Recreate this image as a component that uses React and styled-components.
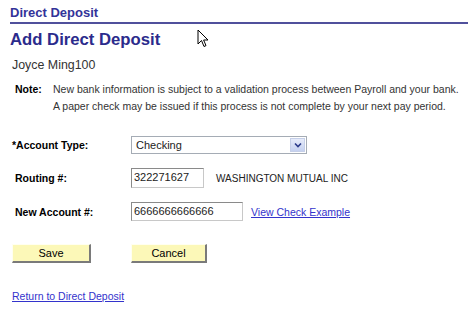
import React from "react";
import styled, { createGlobalStyle } from "styled-components";

const Global = createGlobalStyle`
  html, body { margin: 0; padding: 0; background: #fff; }
  body { font-family: "Liberation Sans", Arial, sans-serif; color: #333; }
`;

const Page = styled.div`
  position: relative;
  width: 474px;
  height: 311px;
  padding: 5px 6px 0 10px;
  box-sizing: border-box;
  overflow: hidden;
`;

const PageTitle = styled.div`
  font-size: 13px;
  font-weight: bold;
  color: #333399;
  line-height: 15px;
  padding-bottom: 2px;
  border-bottom: 2px solid #50509c;
`;

const Heading = styled.h1`
  margin: 5px 0 0 0;
  font-size: 16.7px;
  font-weight: bold;
  color: #2b2b8c;
  line-height: 22px;
`;

const Name = styled.div`
  margin: 7px 0 0 2px;
  font-size: 12.4px;
  color: #333;
  line-height: 14px;
`;

const NoteRow = styled.div`
  display: flex;
  margin: 9px 0 0 5px;
  font-size: 10.5px;
  line-height: 17px;
  white-space: nowrap;
`;

const NoteLabel = styled.span`
  font-weight: bold;
  color: #000;
  width: 38px;
  flex: none;
`;

const NoteText = styled.div`
  color: #333;
`;

const Form = styled.div`
  display: grid;
  grid-template-columns: 116px auto;
  row-gap: 14px;
  align-items: center;
  margin: 21px 0 0 5px;
`;

const Label = styled.div`
  font-size: 10.5px;
  font-weight: bold;
  color: #000;
  margin-left: ${(p) => (p.$required ? "-3px" : "0")};
`;

const Field = styled.div`
  display: flex;
  align-items: center;
  gap: ${(p) => p.$gap || 12}px;
`;

const Select = styled.div`
  width: 176px;
  height: 18px;
  box-sizing: border-box;
  border: 1px solid #a5acb5;
  display: flex;
  align-items: center;
  justify-content: space-between;
  font-size: 11px;
  color: #222;
  padding-left: 4px;
  background: #fff;
`;

const Arrow = styled.div`
  width: 15px;
  height: 14px;
  margin-right: 1px;
  background: linear-gradient(#e6ebfa, #c5d1f0);
  border: 1px solid #c5cfe8;
  box-sizing: border-box;
  display: flex;
  align-items: center;
  justify-content: center;
`;

const Input = styled.div`
  width: ${(p) => p.$w}px;
  height: ${(p) => p.$h}px;
  box-sizing: border-box;
  border: 1px solid #8a8a8a;
  border-right-color: #c8c8c8;
  border-bottom-color: #c8c8c8;
  font-size: 11px;
  color: #222;
  padding: 1px 0 0 2px;
  line-height: 14px;
`;

const Plain = styled.span`
  font-size: 10px;
  color: #222;
`;

const Link = styled.a`
  font-size: 10.5px;
  color: #3333cc;
  text-decoration: underline;
`;

const Buttons = styled.div`
  display: grid;
  grid-template-columns: 119px auto;
  margin: 23px 0 0 2px;
`;

const Button = styled.div`
  width: ${(p) => p.$w}px;
  height: 19px;
  box-sizing: border-box;
  background: #fcf8b8;
  border-right: 2px solid #7a7a7a;
  border-bottom: 2px solid #7a7a7a;
  border-top: 1px solid #fffff0;
  border-left: 1px solid #fffff0;
  font-size: 11px;
  color: #000;
  display: flex;
  align-items: center;
  justify-content: center;
`;

const Footer = styled.div`
  margin: 23px 0 0 2px;
`;

const Cursor = styled.svg`
  position: absolute;
  left: 197px;
  top: 29px;
`;

export default function App() {
  return (
    <>
      <Global />
      <Page>
        <PageTitle>Direct Deposit</PageTitle>
        <Heading>Add Direct Deposit</Heading>
        <Name>Joyce Ming100</Name>
        <NoteRow>
          <NoteLabel>Note:</NoteLabel>
          <NoteText>
            New bank information is subject to a validation process between Payroll and your bank.
            <br />
            A paper check may be issued if this process is not complete by your next pay period.
          </NoteText>
        </NoteRow>
        <Form>
          <Label $required>*Account Type:</Label>
          <Field>
            <Select>
              Checking
              <Arrow>
                <svg width="8" height="6" viewBox="0 0 8 6">
                  <path d="M1 1.5 L4 4.5 L7 1.5" fill="none" stroke="#2a3a8a" strokeWidth="1.6" />
                </svg>
              </Arrow>
            </Select>
          </Field>
          <Label>Routing #:</Label>
          <Field>
            <Input $w={73} $h={20}>322271627</Input>
            <Plain>WASHINGTON MUTUAL INC</Plain>
          </Field>
          <Label>New Account #:</Label>
          <Field $gap={8}>
            <Input $w={112} $h={19}>6666666666666</Input>
            <Link href="#">View Check Example</Link>
          </Field>
        </Form>
        <Buttons>
          <Button $w={79}>Save</Button>
          <Button $w={76}>Cancel</Button>
        </Buttons>
        <Footer>
          <Link href="#">Return to Direct Deposit</Link>
        </Footer>
        <Cursor width="14" height="20" viewBox="0 0 14 20">
          <path d="M1 1 L1 15 L4.5 11.5 L7 17.5 L9 16.6 L6.6 11 L11 11 Z" fill="#fff" stroke="#000" strokeWidth="1" strokeLinejoin="round" />
        </Cursor>
      </Page>
    </>
  );
}
